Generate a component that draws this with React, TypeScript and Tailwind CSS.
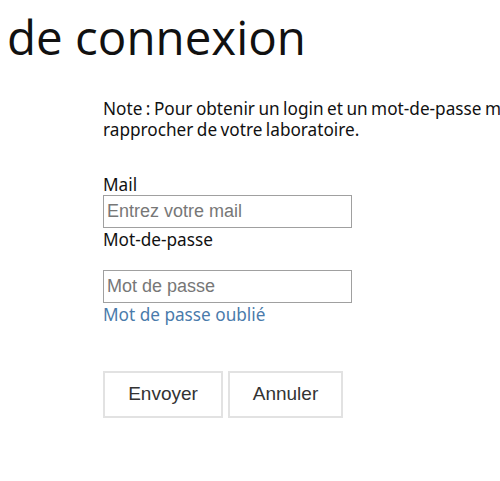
export default function App() {
  return (
    <main className="relative h-[481px] w-[500px] overflow-hidden bg-white">
      <h1 className="ml-[7px] pt-[7px] whitespace-nowrap text-[47.5px] leading-[60px] font-normal text-[#111] [font-family:'Open_Sans',sans-serif]">
        de connexion
      </h1>

      <div className="ml-[103px] mt-[31px] [font-family:'Noto_Sans',sans-serif] text-[17.2px] text-[#111]">
        {/* Note */}
        <p className="whitespace-nowrap leading-[21px] [word-spacing:-1px]">
          Note : Pour obtenir un login et un mot-de-passe merci de vous
          <br />
          rapprocher de votre laboratoire.
        </p>

        {/* Formulaire */}
        <form className="mt-[34px] flex flex-col">
          <label className="leading-[21px]">Mail</label>
          <input
            type="text"
            placeholder="Entrez votre mail"
            className="h-[33px] w-[249px] border border-[#a0a0a0] px-[3px] text-[18px] outline-none placeholder:text-[#777] [font-family:'Liberation_Sans',Arial,sans-serif]"
          />
          <label className="leading-[24px]">Mot-de-passe</label>
          <input
            type="password"
            placeholder="Mot de passe"
            className="mt-[18px] h-[33px] w-[249px] border border-[#a0a0a0] px-[3px] text-[18px] outline-none placeholder:text-[#777] [font-family:'Liberation_Sans',Arial,sans-serif]"
          />
          <a href="#" className="leading-[24px] text-[#4a7bab]">
            Mot de passe oublié
          </a>

          <div className="mt-[44px] flex gap-[5px] [font-family:'Liberation_Sans',Arial,sans-serif]">
            <button type="button" className="h-[47px] w-[120px] border-2 border-[#e2e2e2] bg-white text-[19px] text-[#333]">
              Envoyer
            </button>
            <button type="button" className="h-[47px] w-[115px] border-2 border-[#e2e2e2] bg-white text-[19px] text-[#333]">
              Annuler
            </button>
          </div>
        </form>
      </div>
    </main>
  )
}
